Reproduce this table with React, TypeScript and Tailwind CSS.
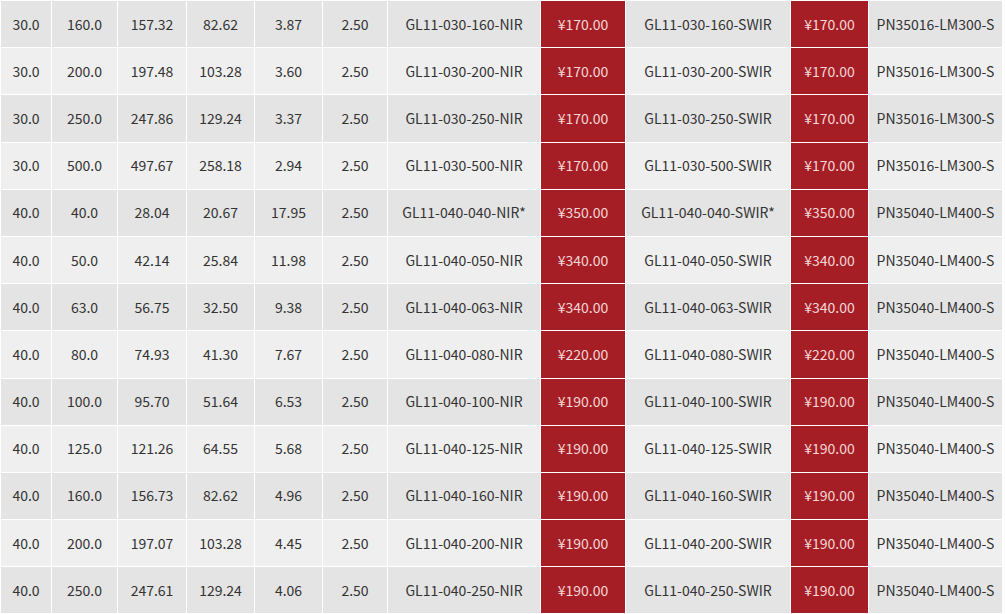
const rows: string[][] = [
  ["30.0", "160.0", "157.32", "82.62", "3.87", "2.50", "GL11-030-160-NIR", "¥170.00", "GL11-030-160-SWIR", "¥170.00", "PN35016-LM300-S"],
  ["30.0", "200.0", "197.48", "103.28", "3.60", "2.50", "GL11-030-200-NIR", "¥170.00", "GL11-030-200-SWIR", "¥170.00", "PN35016-LM300-S"],
  ["30.0", "250.0", "247.86", "129.24", "3.37", "2.50", "GL11-030-250-NIR", "¥170.00", "GL11-030-250-SWIR", "¥170.00", "PN35016-LM300-S"],
  ["30.0", "500.0", "497.67", "258.18", "2.94", "2.50", "GL11-030-500-NIR", "¥170.00", "GL11-030-500-SWIR", "¥170.00", "PN35016-LM300-S"],
  ["40.0", "40.0", "28.04", "20.67", "17.95", "2.50", "GL11-040-040-NIR*", "¥350.00", "GL11-040-040-SWIR*", "¥350.00", "PN35040-LM400-S"],
  ["40.0", "50.0", "42.14", "25.84", "11.98", "2.50", "GL11-040-050-NIR", "¥340.00", "GL11-040-050-SWIR", "¥340.00", "PN35040-LM400-S"],
  ["40.0", "63.0", "56.75", "32.50", "9.38", "2.50", "GL11-040-063-NIR", "¥340.00", "GL11-040-063-SWIR", "¥340.00", "PN35040-LM400-S"],
  ["40.0", "80.0", "74.93", "41.30", "7.67", "2.50", "GL11-040-080-NIR", "¥220.00", "GL11-040-080-SWIR", "¥220.00", "PN35040-LM400-S"],
  ["40.0", "100.0", "95.70", "51.64", "6.53", "2.50", "GL11-040-100-NIR", "¥190.00", "GL11-040-100-SWIR", "¥190.00", "PN35040-LM400-S"],
  ["40.0", "125.0", "121.26", "64.55", "5.68", "2.50", "GL11-040-125-NIR", "¥190.00", "GL11-040-125-SWIR", "¥190.00", "PN35040-LM400-S"],
  ["40.0", "160.0", "156.73", "82.62", "4.96", "2.50", "GL11-040-160-NIR", "¥190.00", "GL11-040-160-SWIR", "¥190.00", "PN35040-LM400-S"],
  ["40.0", "200.0", "197.07", "103.28", "4.45", "2.50", "GL11-040-200-NIR", "¥190.00", "GL11-040-200-SWIR", "¥190.00", "PN35040-LM400-S"],
  ["40.0", "250.0", "247.61", "129.24", "4.06", "2.50", "GL11-040-250-NIR", "¥190.00", "GL11-040-250-SWIR", "¥190.00", "PN35040-LM400-S"],
];

// column widths incl. border, px
const cols = ["w-[51px]", "w-[66px]", "w-[69px]", "w-[68px]", "w-[68px]", "w-[65px]", "w-[153px]", "w-[85px]", "w-[165px]", "w-[78px]", "w-[134px]"];

export default function App() {
  return (
    <div className="w-[1005px] h-[614px] overflow-hidden bg-white">
      <table
        className="w-[1003px] table-fixed border-collapse text-[14px] text-[#333] font-['Noto_Sans_CJK_SC','Noto_Sans',sans-serif]"
      >
        <colgroup>
          {cols.map((c, i) => (
            <col key={i} className={c} />
          ))}
        </colgroup>
        <tbody>
          {rows.map((r, ri) => (
            <tr key={ri} className={ri % 2 === 0 ? "bg-[#e4e4e4]" : "bg-[#efefef]"}>
              {r.map((v, ci) => {
                const price = ci === 7 || ci === 9;
                return (
                  <td
                    key={ci}
                    className={`h-[47.2px] p-0 text-center align-middle border border-white ${
                      price ? "bg-[#a61e25] text-[#f3d6d6]" : ""
                    }`}
                  >
                    {v}
                  </td>
                );
              })}
            </tr>
          ))}
        </tbody>
      </table>
    </div>
  );
}
